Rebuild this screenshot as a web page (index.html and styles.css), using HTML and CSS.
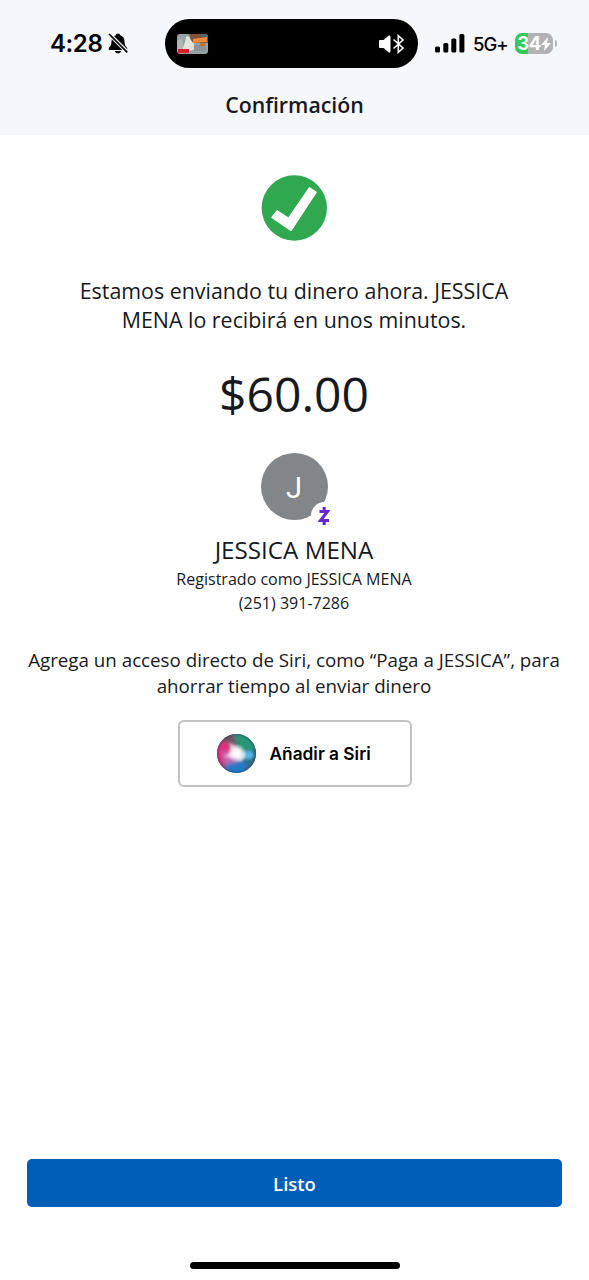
FILE: index.html
```html
<!DOCTYPE html>
<html lang="es">
<head>
<meta charset="utf-8">
<title>Confirmación</title>
<link rel="stylesheet" href="styles.css">
</head>
<body>
<div class="screen">
  <header class="top">
    <div class="status">
      <div class="clock"><span class="time">4:28</span>
        <svg class="bell" viewBox="0 0 20 21" width="20" height="21"><path d="M10 .5C8.700 .5 8 1.300 7.800 2.300C4.800 3.100 3.600 5.700 3.500 8.500C3.400 12 2.500 13.300 .8 15V17H19.200V15C17.500 13.300 16.600 12 16.500 8.500C16.400 5.700 15.200 3.100 12.200 2.300C12 1.300 11.300 .5 10 .5Z"/><path d="M6.800 18H13.200C12.700 19.600 11.500 20.300 10 20.300S7.300 19.600 6.800 18Z"/><path d="M1 .8L19.500 19.300" stroke="#f5f7fb" stroke-width="3.800"/><path d="M1 1L19.300 19.300" stroke="#000" stroke-width="1.700"/></svg>
      </div>
      <div class="island">
        <svg class="thumb" viewBox="0 0 31 20" width="31" height="20"><defs><clipPath id="tc"><rect width="31" height="20" rx="3"/></clipPath></defs><g clip-path="url(#tc)"><rect width="31" height="20" fill="#94a2a4"/><path d="M12 0H31V9H15Z" fill="#81513b"/><path d="M16 5L30 3V8L16 9Z" fill="#f08b36"/><path d="M24 0H31V3H24Z" fill="#4d6974"/><path d="M0 7L5 4L7 15H0Z" fill="#b4b5b0"/><path d="M5 17L8 8L9 3Q12 1 13 5L17 10L18 15L11 18Z" fill="#e2e3df"/><path d="M17 11H29V17H17Z" fill="#8d9495"/><path d="M23 9H28V12H23Z" fill="#b9713f"/><rect x="1" y="15" width="11" height="4" fill="#d7202b"/></g></svg>
        <svg class="sound" viewBox="0 0 27 20" width="27" height="20"><path d="M2 6H5.500L10.500 1.800Q12.500 .8 12.500 3V17Q12.500 19.200 10.500 18.200L5.500 14H2Q1 14 1 13V7Q1 6 2 6Z" fill="#fff"/><path d="M15.500 5.500L25 14L20.300 18.300V1.700L25 6L15.500 14.500" fill="none" stroke="#fff" stroke-width="1.600"/></svg>
      </div>
      <div class="signals">
        <svg viewBox="0 0 30 19" width="30" height="19"><rect y="12.500" width="5" height="6" rx="1.500"/><rect x="8.300" y="9" width="5" height="9.500" rx="1.500"/><rect x="16.300" y="4.500" width="5" height="14" rx="1.500"/><rect x="24.400" y="0" width="5" height="18.500" rx="1.500"/></svg>
        <span class="network">5G+</span>
        <div class="battery"><span>34</span><svg viewBox="0 0 10 14" width="10" height="14"><path d="M7 0L0 8H4L3 14L10 6H6Z" fill="#fff"/></svg></div>
        <i class="nub"></i>
      </div>
    </div>
    <h1>Confirmación</h1>
  </header>
  <main>
    <svg class="check" viewBox="0 0 66 66" width="66" height="66"><circle cx="33.300" cy="33" r="32.700" fill="#2fa84f"/><path d="M11 42.500L16 36L27.500 43.500L48.500 13L55 17.300L30 55.300Z" fill="#fff" stroke="#fff" stroke-width="1.500" stroke-linejoin="round"/></svg>
    <p class="message">Estamos enviando tu dinero ahora. JESSICA<br>MENA lo recibirá en unos minutos.</p>
    <p class="amount">$60.00</p>
    <div class="avatar">J
      <span class="badge"><svg viewBox="0 0 12 20" width="12" height="20"><path d="M1.500 5.500H9.500L2.500 14.500H11M6.200 1V5.500M6.200 14.500V19" fill="none" stroke="#6528d0" stroke-width="3"/></svg></span>
    </div>
    <h2>JESSICA MENA</h2>
    <p class="details"><span class="registered">Registrado como JESSICA MENA</span><br><span class="phone">(251) 391-7286</span></p>
    <p class="tip">Agrega un acceso directo de Siri, como “Paga a JESSICA”, para<br>ahorrar tiempo al enviar dinero</p>
    <button class="siri"><svg class="orb" viewBox="0 0 39 39" width="39" height="39">
      <defs>
        <clipPath id="oc"><circle cx="19.500" cy="19.500" r="19.500"/></clipPath>
        <filter id="soft" x="-50%" y="-50%" width="200%" height="200%"><feGaussianBlur stdDeviation="2.200"/></filter>
        <filter id="glow" x="-50%" y="-50%" width="200%" height="200%"><feGaussianBlur stdDeviation="1.800"/></filter>
        <radialGradient id="rim"><stop offset=".85" stop-color="#263f52" stop-opacity="0"/><stop offset="1" stop-color="#263f52" stop-opacity=".45"/></radialGradient>
        <radialGradient id="core"><stop stop-color="#fff"/><stop offset=".35" stop-color="#fff" stop-opacity=".8"/><stop offset="1" stop-color="#fff" stop-opacity="0"/></radialGradient>
      </defs>
      <g clip-path="url(#oc)">
        <rect width="39" height="39" fill="#655585"/>
        <g filter="url(#soft)">
          <path d="M16 -4H43V17L22 20Z" fill="#259675"/>
          <path d="M4 0H17L18 16L5 10Z" fill="#705061"/>
          <path d="M-4 8L9 8L20 19L10 33L-4 31Z" fill="#df2f7c"/>
          <path d="M20 20L43 14V29L32 33Z" fill="#246e87"/>
          <path d="M17 24L31 30L28 43H7L8 31Z" fill="#237ac7"/>
          <path d="M4 18L18 17L20 28L8 29Z" fill="#c469af"/>
        </g>
        <g filter="url(#glow)">
          <ellipse cx="31" cy="21" rx="6" ry="4.500" fill="#58b4e2"/>
          <path d="M12 8L23 15L28 21L25 28L18 24L7 23L14 18Z" fill="#fff" opacity=".65"/>
        </g>
        <circle cx="20" cy="19.500" r="10" fill="url(#core)"/>
        <circle cx="19.500" cy="19.500" r="19.500" fill="url(#rim)"/>
      </g></svg><span class="siri-label">Añadir a Siri</span></button>
  </main>
  <footer>
    <button class="done">Listo</button>
    <div class="home"></div>
  </footer>
</div>
</body>
</html>
```
FILE: styles.css
```css
* { box-sizing: border-box; }
body { margin: 0; background: #fff; }
h1, h2, p { margin: 0; font-weight: 400; }
button { padding: 0; font: inherit; }
svg { display: block; flex: none; }
.screen { width: 589px; height: 1280px; display: flex; flex-direction: column; font-family: "Open Sans", sans-serif; color: #17191d; white-space: nowrap; }
.top { height: 135px; background: #f5f7fb; padding-top: 19px; }
.status { height: 49px; display: flex; align-items: center; font-family: Inter, sans-serif; color: #000; }
.clock { width: 165px; padding-left: 50px; display: flex; align-items: center; gap: 6px; }
.time { font-size: 24px; font-weight: 600; line-height: 30px; letter-spacing: -.4px; }
.island { width: 253px; height: 49px; border-radius: 25px; background: #000; display: flex; justify-content: space-between; align-items: center; padding: 0 13px 0 12px; }
.signals { display: flex; align-items: center; padding-left: 17px; }
.network { width: 35px; margin-left: 8px; padding-top: 1px; font-size: 18.500px; font-weight: 500; letter-spacing: -1px; }
.battery { width: 38px; height: 21px; margin-left: 7px; border-radius: 7px; background: linear-gradient(90deg, #34c759 13px, #b2b2b6 13px); display: flex; align-items: center; justify-content: center; color: #fff; font-size: 18.500px; font-weight: 700; line-height: 21px; letter-spacing: -.5px; }
.nub { width: 2px; height: 7px; margin-left: 2px; border-radius: 0 2px 2px 0; background: #b2b2b6; }
h1 { margin-top: 22px; font-size: 21.300px; line-height: 30px; font-weight: 600; text-align: center; }
main { flex: 1; display: flex; flex-direction: column; align-items: center; text-align: center; padding: 40px 1px 0 0; }
.message { margin-top: 35px; font-size: 21.400px; line-height: 29px; }
.amount { margin-top: 28px; font-size: 48px; line-height: 64px; }
.avatar { position: relative; width: 67px; height: 67px; margin-top: 27px; border-radius: 50%; background: #828688; color: #fff; font-family: Roboto, sans-serif; font-size: 29px; line-height: 70px; }
.badge { position: absolute; left: 50px; top: 49px; width: 27px; height: 27px; border-radius: 50%; background: #fff; display: grid; place-items: center; }
h2 { margin-top: 15px; font-size: 24.200px; line-height: 30px; }
.details { margin-top: 3px; font-size: 16.050px; line-height: 23.500px; }
.tip { margin-top: 32px; font-size: 18.750px; line-height: 26px; }
.siri { width: 234px; height: 67px; margin: 21px 0 0 1px; border: 2px solid #c2c2c2; border-radius: 6px; background: #fff; display: flex; align-items: center; padding-left: 37px; gap: 14px; color: #000; }
.siri-label { font-family: Inter, sans-serif; font-size: 17.300px; line-height: 24px; font-weight: 600; }
footer { height: 121px; padding: 0 27px; }
.done { display: block; width: 535px; height: 48px; border: 0; border-radius: 5px; background: #005eb8; color: #fff; font-size: 18.500px; font-weight: 600; line-height: 49px; }
.home { width: 210px; height: 7px; margin: 55px auto 0; border-radius: 4px; background: #000; }
```
